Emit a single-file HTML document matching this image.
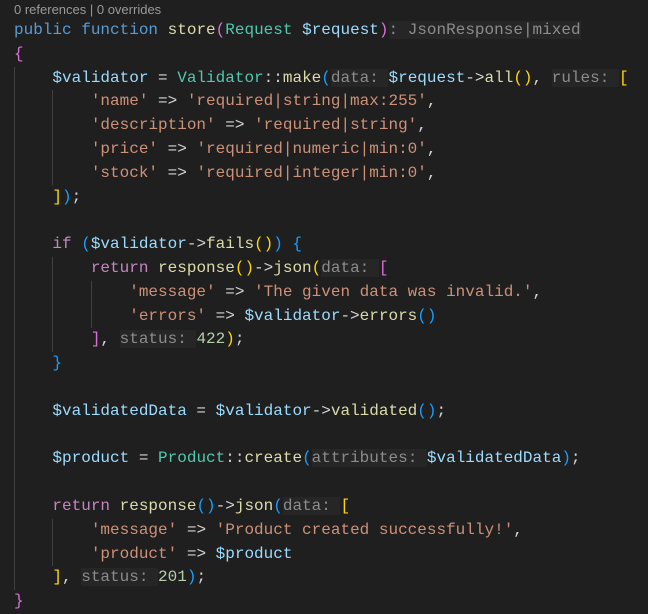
<!DOCTYPE html>
<html><head><meta charset="utf-8"><style>
html,body{margin:0;padding:0;background:#1f1f1f;width:648px;height:614px;overflow:hidden;position:relative}
.hdr{position:absolute;left:14px;top:1px;font:13px "Liberation Sans",sans-serif;color:#999;line-height:17px}
pre{position:absolute;left:14px;top:19px;margin:0;font:16px/23.8px "Liberation Mono",monospace;color:#d4d4d4;white-space:pre}
.g{position:absolute;width:1px;background:#404040}
.k{color:#569cd6}.f{color:#dcdcaa}.c{color:#4ec9b0}.v{color:#9cdcfe}.s{color:#ce9178}.p{color:#c586c0}.n{color:#b5cea8}
.h{color:#8c8c8c;background:#262626}
.y{color:#ffd700}.m{color:#da70d6}.b{color:#179fff}
</style></head><body>
<div class="hdr">0 references | 0 overrides</div>
<div class="g" style="left:14px;top:67px;height:523px"></div>
<div class="g" style="left:52px;top:90px;height:95px"></div>
<div class="g" style="left:52px;top:257px;height:95px"></div>
<div class="g" style="left:52px;top:519px;height:47px"></div>
<div class="g" style="left:91px;top:281px;height:47px"></div>
<pre><span class="k">public</span> <span class="k">function</span> <span class="f">store</span><span class="m">(</span><span class="c">Request</span> <span class="v">$request</span><span class="m">)</span><span class="h">: JsonResponse|mixed</span>
<span class="m">{</span>
    <span class="v">$validator</span> = <span class="c">Validator</span>::<span class="f">make</span><span class="b">(</span><span class="h">data: </span><span class="v">$request</span>-&gt;<span class="f">all</span><span class="y">()</span>, <span class="h">rules: </span><span class="y">[</span>
        <span class="s">'name'</span> =&gt; <span class="s">'required|string|max:255'</span>,
        <span class="s">'description'</span> =&gt; <span class="s">'required|string'</span>,
        <span class="s">'price'</span> =&gt; <span class="s">'required|numeric|min:0'</span>,
        <span class="s">'stock'</span> =&gt; <span class="s">'required|integer|min:0'</span>,
    <span class="y">]</span><span class="b">)</span>;

    <span class="p">if</span> <span class="b">(</span><span class="v">$validator</span>-&gt;<span class="f">fails</span><span class="y">()</span><span class="b">)</span> <span class="b">{</span>
        <span class="p">return</span> <span class="f">response</span><span class="y">()</span>-&gt;<span class="f">json</span><span class="y">(</span><span class="h">data: </span><span class="m">[</span>
            <span class="s">'message'</span> =&gt; <span class="s">'The given data was invalid.'</span>,
            <span class="s">'errors'</span> =&gt; <span class="v">$validator</span>-&gt;<span class="f">errors</span><span class="b">()</span>
        <span class="m">]</span>, <span class="h">status: </span><span class="n">422</span><span class="y">)</span>;
    <span class="b">}</span>

    <span class="v">$validatedData</span> = <span class="v">$validator</span>-&gt;<span class="f">validated</span><span class="b">()</span>;

    <span class="v">$product</span> = <span class="c">Product</span>::<span class="f">create</span><span class="b">(</span><span class="h">attributes: </span><span class="v">$validatedData</span><span class="b">)</span>;

    <span class="p">return</span> <span class="f">response</span><span class="b">()</span>-&gt;<span class="f">json</span><span class="b">(</span><span class="h">data: </span><span class="y">[</span>
        <span class="s">'message'</span> =&gt; <span class="s">'Product created successfully!'</span>,
        <span class="s">'product'</span> =&gt; <span class="v">$product</span>
    <span class="y">]</span>, <span class="h">status: </span><span class="n">201</span><span class="b">)</span>;
<span class="m">}</span></pre>
</body></html>
